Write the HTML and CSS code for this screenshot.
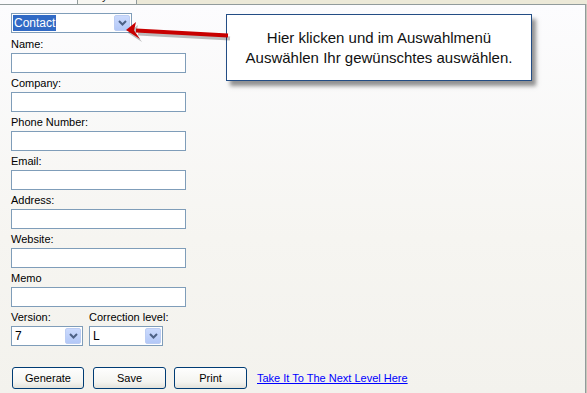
FILE: index.html
```html
<html lang="en">
<head>
<meta charset="UTF-8">
<meta name="viewport" content="width=device-width, initial-scale=1.0">
<title>QR Code</title>
<link rel="stylesheet" href="styles.css">
</head>
<body>

<div class="tabstrip">
  <div class="strip-left"></div>
  <div class="tab"><span>Pretty Lead</span></div>
  <div class="strip-fill"></div>
</div>

<section class="page">
  <div class="form">
    <div class="combo combo-type">
      <span class="combo-text"><span class="selected">Contact</span></span>
      <span class="combo-btn"><svg width="9" height="6" viewBox="0 0 9 6"><path d="M1 1 L4.5 4.5 L8 1" fill="none" stroke="#4d6185" stroke-width="2"/></svg></span>
    </div>

    <label class="field-label">Name:</label>
    <input type="text" class="textbox">
    <label class="field-label">Company:</label>
    <input type="text" class="textbox">
    <label class="field-label">Phone Number:</label>
    <input type="text" class="textbox">
    <label class="field-label">Email:</label>
    <input type="text" class="textbox">
    <label class="field-label">Address:</label>
    <input type="text" class="textbox">
    <label class="field-label">Website:</label>
    <input type="text" class="textbox">
    <label class="field-label">Memo</label>
    <input type="text" class="textbox">

    <div class="options">
      <div class="option">
        <label class="field-label">Version:</label>
        <div class="combo combo-version">
          <span class="combo-text">7</span>
          <span class="combo-btn"><svg width="9" height="6" viewBox="0 0 9 6"><path d="M1 1 L4.5 4.5 L8 1" fill="none" stroke="#4d6185" stroke-width="2"/></svg></span>
        </div>
      </div>
      <div class="option">
        <label class="field-label">Correction level:</label>
        <div class="combo combo-level">
          <span class="combo-text">L</span>
          <span class="combo-btn"><svg width="9" height="6" viewBox="0 0 9 6"><path d="M1 1 L4.5 4.5 L8 1" fill="none" stroke="#4d6185" stroke-width="2"/></svg></span>
        </div>
      </div>
    </div>

    <div class="actions">
      <button class="xp-btn btn-generate">Generate</button>
      <button class="xp-btn btn-save">Save</button>
      <button class="xp-btn btn-print">Print</button>
      <a href="#" class="next-link">Take It To The Next Level Here</a>
    </div>
  </div>

  <!-- annotation on top of the screenshot -->
  <div class="callout">Hier klicken und im Auswahlmenü<br>Auswählen Ihr gewünschtes auswählen.</div>
  <svg class="arrow" width="112" height="30" viewBox="0 0 112 30">
    <g transform="translate(2,3)" opacity="0.25">
      <path d="M108 18.5 L16 13.5" stroke="#000" stroke-width="4"/>
      <path d="M6 13 L16 5 L14 13.6 L20 22 Z" fill="#000"/>
    </g>
    <path d="M108 18.5 L16 13.5" stroke="#c80000" stroke-width="4"/>
    <path d="M6 13 L16 5 L14 13.6 L20 22 Z" fill="#c80000"/>
  </svg>
</section>

</body>
</html>
```

FILE: styles.css
```css
:root{
  --uifont: "Liberation Sans", Arial, sans-serif;
  --tabborder: #919b9c;
  --fieldborder: #7f9db9;
  --xpbeige: #ece9d8;
}

*{
  margin: 0;
  padding: 0;
  box-sizing: border-box;
}

body {
  font-family: var(--uifont);
  font-size: 11px;
  color: #000;
  background-color: var(--xpbeige);
  width: 587px;
  height: 393px;
  overflow: hidden;
}

/* tab header strip */
.tabstrip {
  display: flex;
  height: 4px;
}

.strip-left {
  width: 77px;
  background-color: #fbfbfd;
}

.tab {
  width: 60px;
  overflow: hidden;
  background-color: #f7f6f1;
  border-left: 1px solid var(--tabborder);
  border-right: 1px solid var(--tabborder);
  text-align: center;
}

.tab span {
  display: block;
  line-height: 13px;
  margin-top: -10px;
  color: #222;
}

.strip-fill {
  flex: 1;
  background-color: var(--xpbeige);
}

/* tab page */
.page {
  position: relative;
  width: 586px;
  height: 389px;
  border-top: 1px solid var(--tabborder);
  border-right: 1px solid var(--tabborder);
  box-shadow: 1px 0 0 #c9c7ba;
  background: linear-gradient(to bottom, #fcfcfe 0%, #f6f5f1 60%, #f3f2ed 100%);
}

.form {
  display: flex;
  flex-direction: column;
  align-items: flex-start;
  padding: 8px 0 0 11px;
}

.field-label {
  display: block;
  height: 13px;
  line-height: 13px;
  margin: 4px 0 2px 0;
}

.textbox {
  width: 175px;
  height: 20px;
  border: 1px solid var(--fieldborder);
  background-color: #fff;
  outline: none;
}

/* combo boxes */
.combo {
  display: flex;
  align-items: center;
  height: 20px;
  border: 1px solid var(--fieldborder);
  background-color: #fff;
  padding: 1px;
}

.combo-type {
  width: 121px;
  margin-bottom: 1px;
}

.combo-version {
  width: 72px;
}

.combo-level {
  width: 74px;
}

.combo-text {
  flex: 1;
  padding-left: 2px;
  line-height: 16px;
  font-size: 12px;
}

.selected {
  display: inline-block;
  background-color: #316ac5;
  color: #fff;
  padding: 0 1px;
  line-height: 16px;
}

.combo-type .combo-text {
  padding-left: 0;
}

.combo-btn {
  display: flex;
  align-items: center;
  justify-content: center;
  width: 16px;
  height: 16px;
  border-radius: 2px;
  border: 1px solid #bccdf3;
  background: linear-gradient(to bottom, #cbdafd, #b3c8f7);
}

.options {
  display: flex;
  gap: 6px;
}

/* buttons row */
.actions {
  display: flex;
  align-items: center;
  margin-top: 21px;
  padding-left: 1px;
}

.xp-btn {
  height: 22px;
  font-family: var(--uifont);
  font-size: 11px;
  color: #000;
  border: 1px solid #003c74;
  border-radius: 3px;
  background: linear-gradient(to bottom, #fefefe 0%, #f4f4f0 70%, #e3e2da 100%);
  margin-right: 9px;
}

.btn-generate { width: 72px; }
.btn-save { width: 73px; margin-right: 8px; }
.btn-print { width: 73px; margin-right: 10px; }

.next-link {
  color: #0000ff;
  text-decoration: underline;
  font-size: 11px;
}

/* annotation */
.callout {
  position: absolute;
  left: 226px;
  top: 9px;
  width: 306px;
  height: 67px;
  border: 1px solid #234d85;
  background-color: #fff;
  box-shadow: 4px 5px 4px rgba(60, 60, 60, 0.55);
  font-family: var(--uifont);
  font-size: 15px;
  line-height: 20px;
  color: #111;
  text-align: center;
  padding-top: 13px;
}

.arrow {
  position: absolute;
  left: 120px;
  top: 12px;
}
```
